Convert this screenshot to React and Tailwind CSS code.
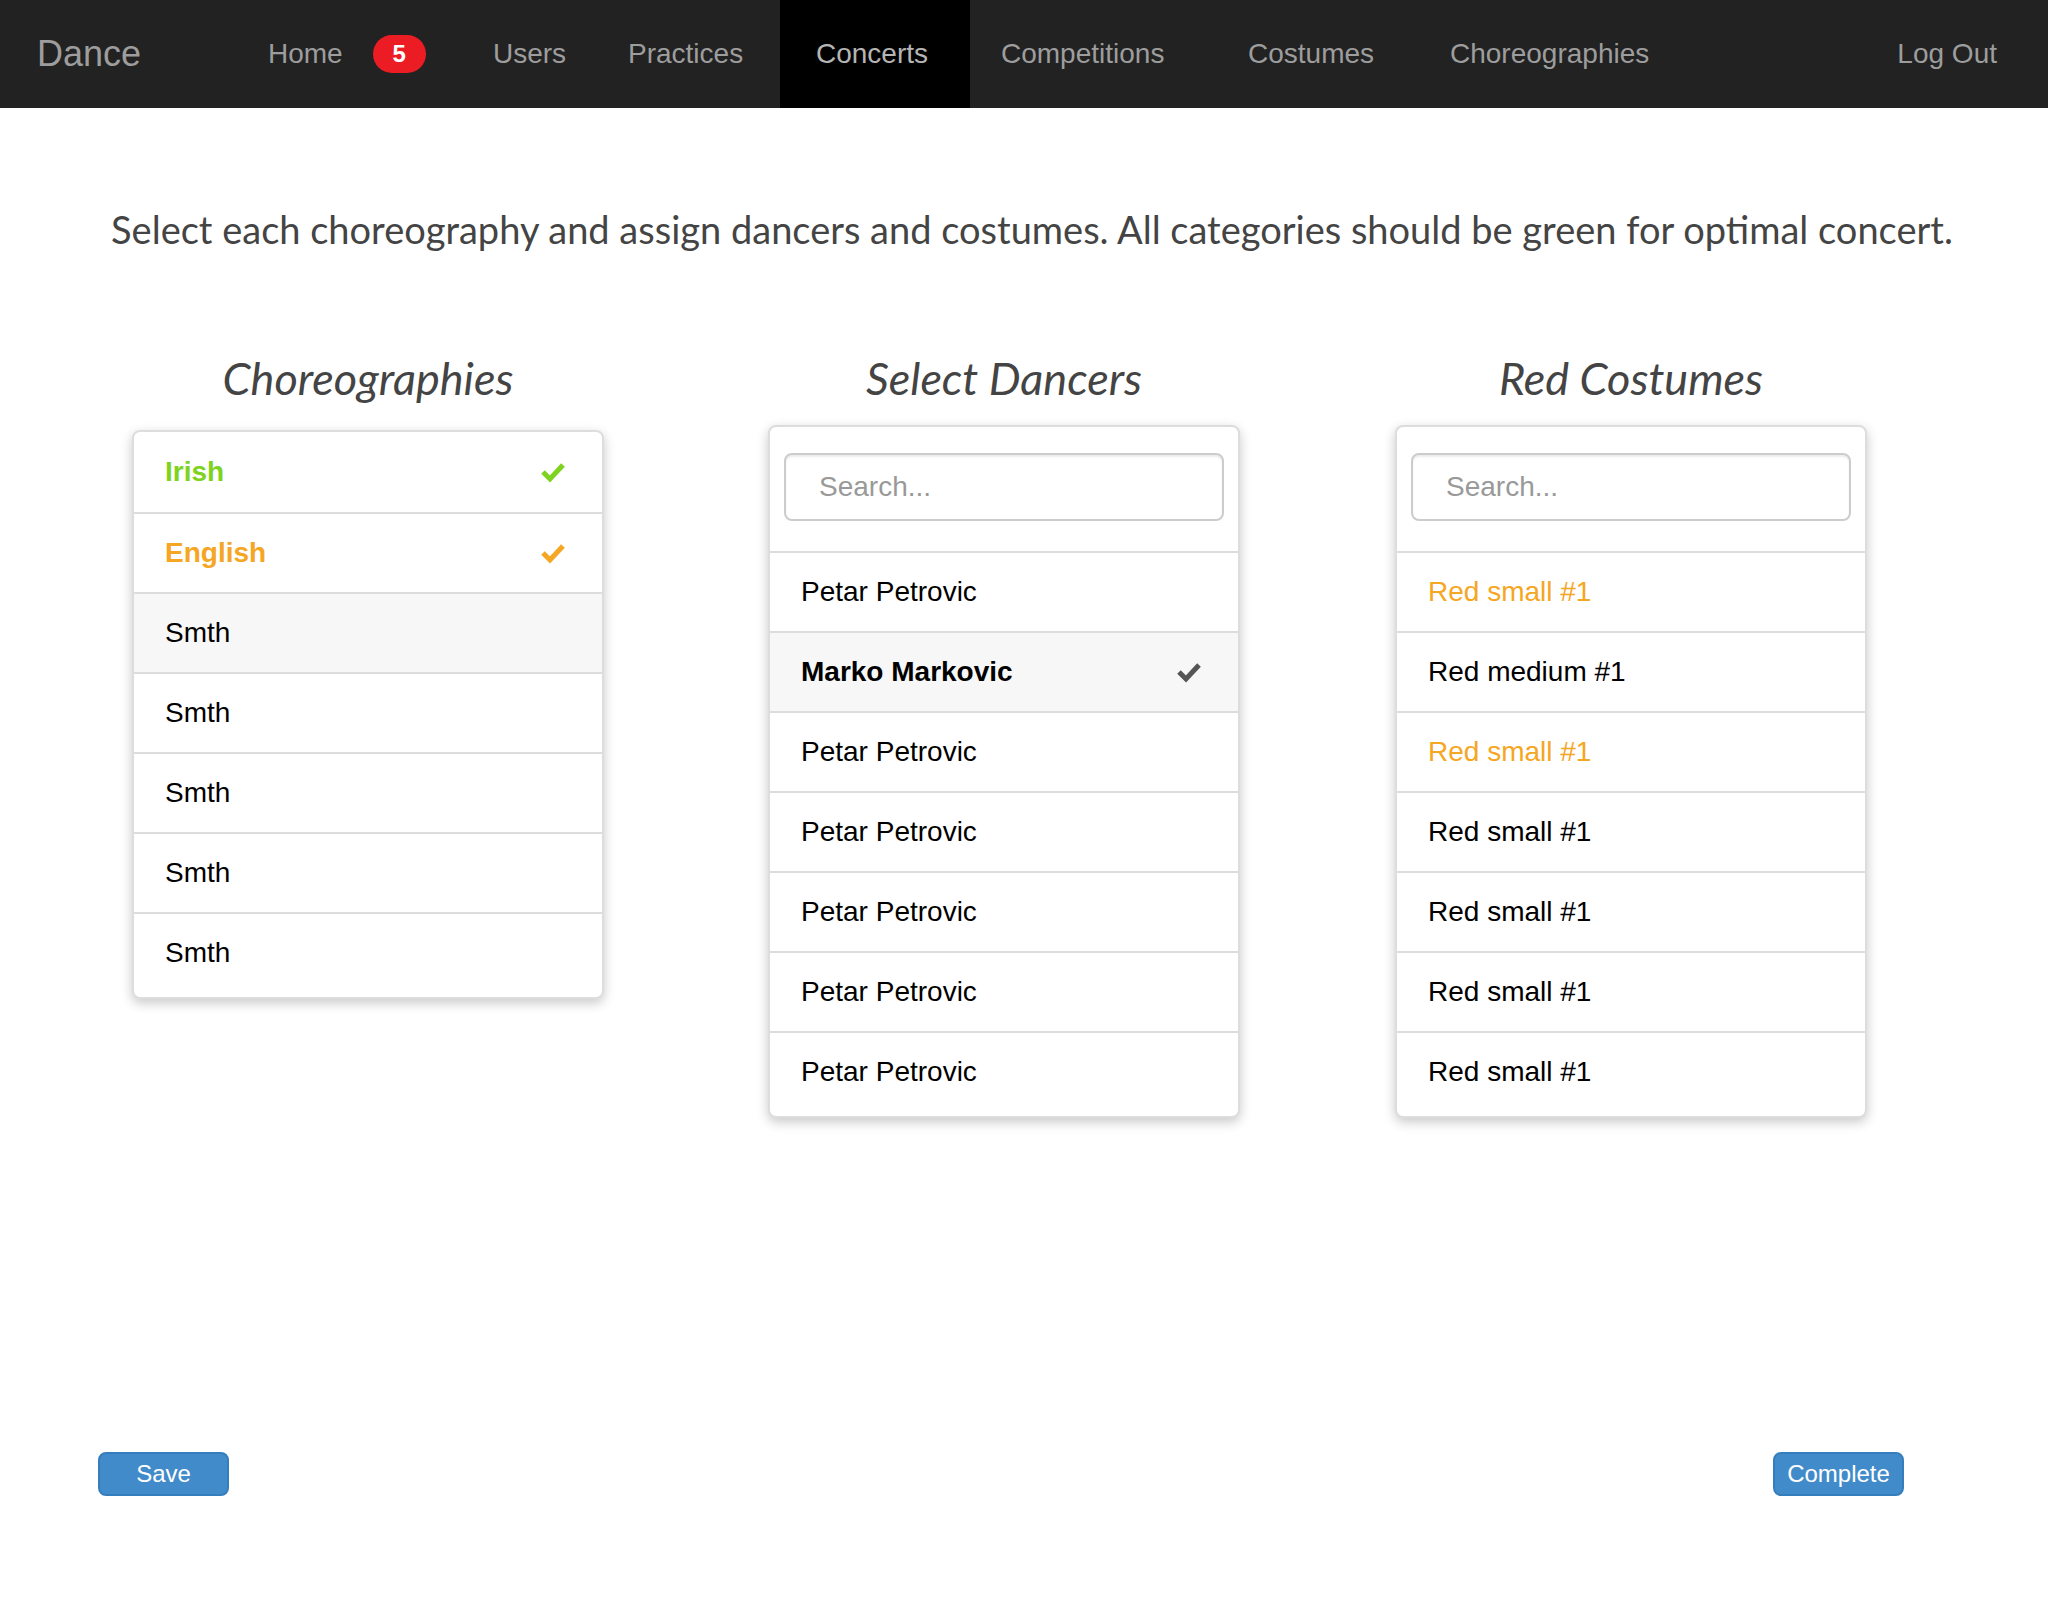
import React from "react";

const Check = ({ color }) => (
  <svg width="26" height="22" viewBox="0 0 26 22" className="shrink-0">
    <polyline points="3,11 10,18 23,4" fill="none" stroke={color} strokeWidth="5" strokeLinejoin="miter" strokeLinecap="butt" />
  </svg>
);

const Row = ({ children, first, className = "", icon }) => (
  <div className={`flex h-[80px] items-center justify-between pl-[31px] pr-[36px] text-[28px] ${first ? "" : "border-t-2 border-[#dddddd]"} ${className}`}>
    <span>{children}</span>
    {icon}
  </div>
);

const Panel = ({ children, className = "" }) => (
  <div className={`w-[472px] overflow-hidden rounded-[8px] border-2 border-[#dddddd] bg-white pb-[5px] shadow-[0_4px_12px_rgba(0,0,0,0.22)] ${className}`}>
    {children}
  </div>
);

const Search = () => (
  <div className="px-[14px] pb-[30px] pt-[26px]">
    <div className="flex h-[68px] items-center rounded-[8px] border-2 border-[#cccccc] pl-[33px] text-[28px] text-[#999999] shadow-[inset_0_2px_2px_rgba(0,0,0,0.08)]">
      Search...
    </div>
  </div>
);

const Heading = ({ children }) => (
  <h2 className="mb-[22px] text-center text-[45px] leading-[50px] italic text-[#444444]" style={{ fontFamily: "Lato, 'Open Sans', sans-serif" }}>
    {children}
  </h2>
);

export default function App() {
  const sans = { fontFamily: "'Liberation Sans', Arial, sans-serif" };
  return (
    <div className="min-h-[1600px] bg-white" style={sans}>
      <nav className="flex h-[108px] items-center bg-[#222222] text-[28px] text-[#9d9d9d]">
        <div className="w-[268px] pl-[37px] text-[36px]">Dance</div>
        <div className="flex w-[225px] items-center">
          <span>Home</span>
          <span className="ml-[30px] flex h-[38px] w-[53px] items-center justify-center rounded-full bg-[#ec1c24] text-[24px] font-bold text-white">5</span>
        </div>
        <div className="w-[135px]">Users</div>
        <div className="w-[152px]">Practices</div>
        <div className="flex h-full w-[190px] items-center bg-black pl-[36px] text-[#b5b5b5]">Concerts</div>
        <div className="w-[278px] pl-[31px]">Competitions</div>
        <div className="w-[202px]">Costumes</div>
        <div className="flex-1">Choreographies</div>
        <div className="pr-[51px]">Log Out</div>
      </nav>

      <p className="pl-[16px] pt-[99px] text-center text-[38px] leading-[44px] text-[#444444]" style={{ fontFamily: "Lato, 'Open Sans', sans-serif" }}>
        Select each choreography and assign dancers and costumes. All categories should be green for optimal concert.
      </p>

      <div className="mt-[102px] flex items-start pl-[132px]">
        <div className="flex w-[472px] flex-col">
          <Heading>Choreographies</Heading>
          <Panel className="mt-[5px]">
            <Row first className="font-bold text-[#7ed321]" icon={<Check color="#7ed321" />}>Irish</Row>
            <Row className="font-bold text-[#f5a623]" icon={<Check color="#f5a623" />}>English</Row>
            <Row className="bg-[#f7f7f7] text-black">Smth</Row>
            <Row className="text-black">Smth</Row>
            <Row className="text-black">Smth</Row>
            <Row className="text-black">Smth</Row>
            <Row className="text-black">Smth</Row>
          </Panel>
        </div>

        <div className="ml-[164px] flex w-[472px] flex-col">
          <Heading>Select Dancers</Heading>
          <Panel>
            <Search />
            <Row className="text-black">Petar Petrovic</Row>
            <Row className="bg-[#f7f7f7] font-bold text-black" icon={<Check color="#555555" />}>Marko Markovic</Row>
            <Row className="text-black">Petar Petrovic</Row>
            <Row className="text-black">Petar Petrovic</Row>
            <Row className="text-black">Petar Petrovic</Row>
            <Row className="text-black">Petar Petrovic</Row>
            <Row className="text-black">Petar Petrovic</Row>
          </Panel>
        </div>

        <div className="ml-[155px] flex w-[472px] flex-col">
          <Heading>Red Costumes</Heading>
          <Panel>
            <Search />
            <Row className="text-[#f5a623]">Red small #1</Row>
            <Row className="text-black">Red medium #1</Row>
            <Row className="text-[#f5a623]">Red small #1</Row>
            <Row className="text-black">Red small #1</Row>
            <Row className="text-black">Red small #1</Row>
            <Row className="text-black">Red small #1</Row>
            <Row className="text-black">Red small #1</Row>
          </Panel>
        </div>
      </div>

      <div className="mt-[334px] flex justify-between pl-[98px] pr-[144px]">
        <button className="flex h-[44px] w-[131px] items-center justify-center rounded-[8px] border-2 border-[#357ebd] bg-[#428bca] text-[24px] text-white">Save</button>
        <button className="flex h-[44px] w-[131px] items-center justify-center rounded-[8px] border-2 border-[#357ebd] bg-[#428bca] text-[24px] text-white">Complete</button>
      </div>
    </div>
  );
}
